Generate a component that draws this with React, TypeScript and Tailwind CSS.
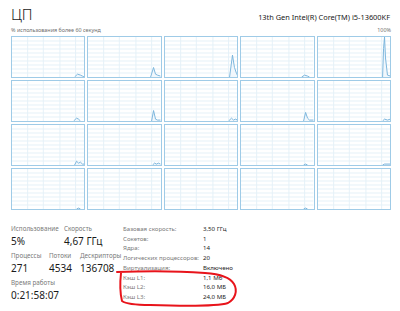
import React from "react";

// ─── Data ────────────────────────────────────────────────────────────────────

type Pt = [number, number];

const CELL_W = 74;
const CELL_H = 42;

/** Per-core activity spikes, [x, height] in cell pixels. */
const spikes: Pt[][] = [
  [[64, 0], [67, 3], [70, 2], [72, 1], [74, 0]],
  [[64, 0], [67, 10], [69, 3], [71, 2], [74, 1]],
  [[66, 0], [69, 23], [71, 10], [73, 4], [74, 2]],
  [[62, 0], [65, 2], [68, 1], [70, 0]],
  [[66, 0], [67, 30], [68, 42], [69, 20], [71, 2], [74, 1]],

  [[63, 0], [66, 3], [68, 2], [70, 0]],
  [[65, 0], [67, 11], [69, 2], [71, 1], [74, 1]],
  [[65, 0], [68, 3], [70, 1], [72, 2], [74, 1]],
  [[64, 0], [66, 9], [68, 3], [70, 1], [74, 1]],
  [[66, 0], [68, 2], [71, 1], [74, 2]],

  [[64, 0], [66, 4], [68, 2], [70, 3], [72, 1], [74, 1]],
  [[66, 0], [68, 2], [70, 1], [72, 2], [74, 1]],
  [],
  [[64, 0], [66, 1], [68, 0]],
  [[66, 0], [68, 1], [74, 1]],

  [[66, 0], [68, 1], [70, 0]],
  [],
  [],
  [[64, 0], [66, 1], [68, 0]],
  [],
];

const details: [string, string][] = [
  ["Базовая скорость:", "3,50 ГГц"],
  ["Сокетов:", "1"],
  ["Ядра:", "14"],
  ["Логических процессоров:", "20"],
  ["Виртуализация:", "Включено"],
  ["Кэш L1:", "1,1 Мб"],
  ["Кэш L2:", "16,0 МБ"],
  ["Кэш L3:", "24,0 МБ"],
];

// ─── Sub-components ──────────────────────────────────────────────────────────

function CoreGraph({ pts }: { pts: Pt[] }) {
  const vLines = [16, 32, 49, 65];
  const hLines = [1, 2, 3, 4, 5, 6, 7, 8, 9].map((i) => (CELL_H * i) / 10);
  const line = pts.map(([x, h]) => `${x},${CELL_H - h}`).join(" ");
  return (
    <div className="h-[42px] border border-[#9fcbe7] bg-white">
      <svg width="100%" height="100%" viewBox={`0 0 ${CELL_W} ${CELL_H}`} preserveAspectRatio="none" className="block">
        {vLines.map((x) => (
          <line key={`v${x}`} x1={x} y1={0} x2={x} y2={CELL_H} stroke="#e4f0f8" strokeWidth={1} />
        ))}
        {hLines.map((y) => (
          <line key={`h${y}`} x1={0} y1={y} x2={CELL_W} y2={y} stroke="#e4f0f8" strokeWidth={1} />
        ))}
        {pts.length > 0 && (
          <>
            <polygon points={`${line} ${pts[pts.length - 1][0]},${CELL_H} ${pts[0][0]},${CELL_H}`} fill="#f1f7fc" />
            <polyline points={line} fill="none" stroke="#79b4dc" strokeWidth={1} />
          </>
        )}
      </svg>
    </div>
  );
}

function Stat({ label, value, className = "" }: { label: string; value: string; className?: string }) {
  return (
    <div className={className}>
      <div className="whitespace-nowrap text-[6.3px] leading-[9px] text-[#7a7a7a]">{label}</div>
      <div className="mt-[2px] whitespace-nowrap text-[10px] leading-[13px] text-[#1a1a1a]">{value}</div>
    </div>
  );
}

// ─── Main component ──────────────────────────────────────────────────────────

export default function App() {
  return (
    <div className="relative h-[311px] w-[400px] overflow-hidden bg-white pl-[11px] pr-[9px] font-['Noto_Sans',sans-serif] text-[#1a1a1a]">
      {/* ── Header ─────────────────────────────────────────────────────── */}
      <div className="flex h-[24px] items-baseline justify-between pt-[7px]">
        <h1 className="text-[15px] leading-none font-light">ЦП</h1>
        <span className="pr-[1px] text-[7.4px] leading-none">13th Gen Intel(R) Core(TM) i5-13600KF</span>
      </div>
      <div className="flex h-[12px] items-center justify-between text-[5.4px] text-[#6f6f6f]">
        <span>% использования более 60 секунд</span>
        <span>100%</span>
      </div>

      {/* ── Per-core graphs ────────────────────────────────────────────── */}
      <div className="grid grid-cols-5 gap-[2px]">
        {spikes.map((pts, i) => (
          <CoreGraph key={i} pts={pts} />
        ))}
      </div>

      {/* ── Stats ──────────────────────────────────────────────────────── */}
      <div className="mt-[14px] flex">
        <div className="w-[112px]">
          <div className="flex">
            <Stat label="Использование" value="5%" className="w-[53px]" />
            <Stat label="Скорость" value="4,67 ГГц" />
          </div>
          <div className="mt-[3px] flex">
            <Stat label="Процессы" value="271" className="w-[38px]" />
            <Stat label="Потоки" value="4534" className="w-[31px]" />
            <Stat label="Дескрипторы" value="136708" />
          </div>
          <Stat label="Время работы" value="0:21:58:07" className="mt-[3px]" />
        </div>
        <div className="text-[6.1px] leading-[9.7px]">
          {details.map(([k, v]) => (
            <div key={k} className="flex whitespace-nowrap">
              <span className="w-[80px] text-[#7a7a7a]">{k}</span>
              <span className="text-[#1a1a1a]">{v}</span>
            </div>
          ))}
        </div>
      </div>

      {/* ── Red hand-drawn annotation ──────────────────────────────────── */}
      <svg className="pointer-events-none absolute left-0 top-0" width="400" height="311" viewBox="0 0 400 311">
        <path
          d="M117 272 C140 271 180 271 205 273 C220 274 230 277 234 284 C238 291 235 299 228 303 C215 307 180 306 150 305 C135 305 126 304 122 301 C120 293 120 282 121 273"
          fill="none"
          stroke="#e8141b"
          strokeWidth={2}
          strokeLinecap="round"
          strokeLinejoin="round"
        />
      </svg>
    </div>
  );
}
